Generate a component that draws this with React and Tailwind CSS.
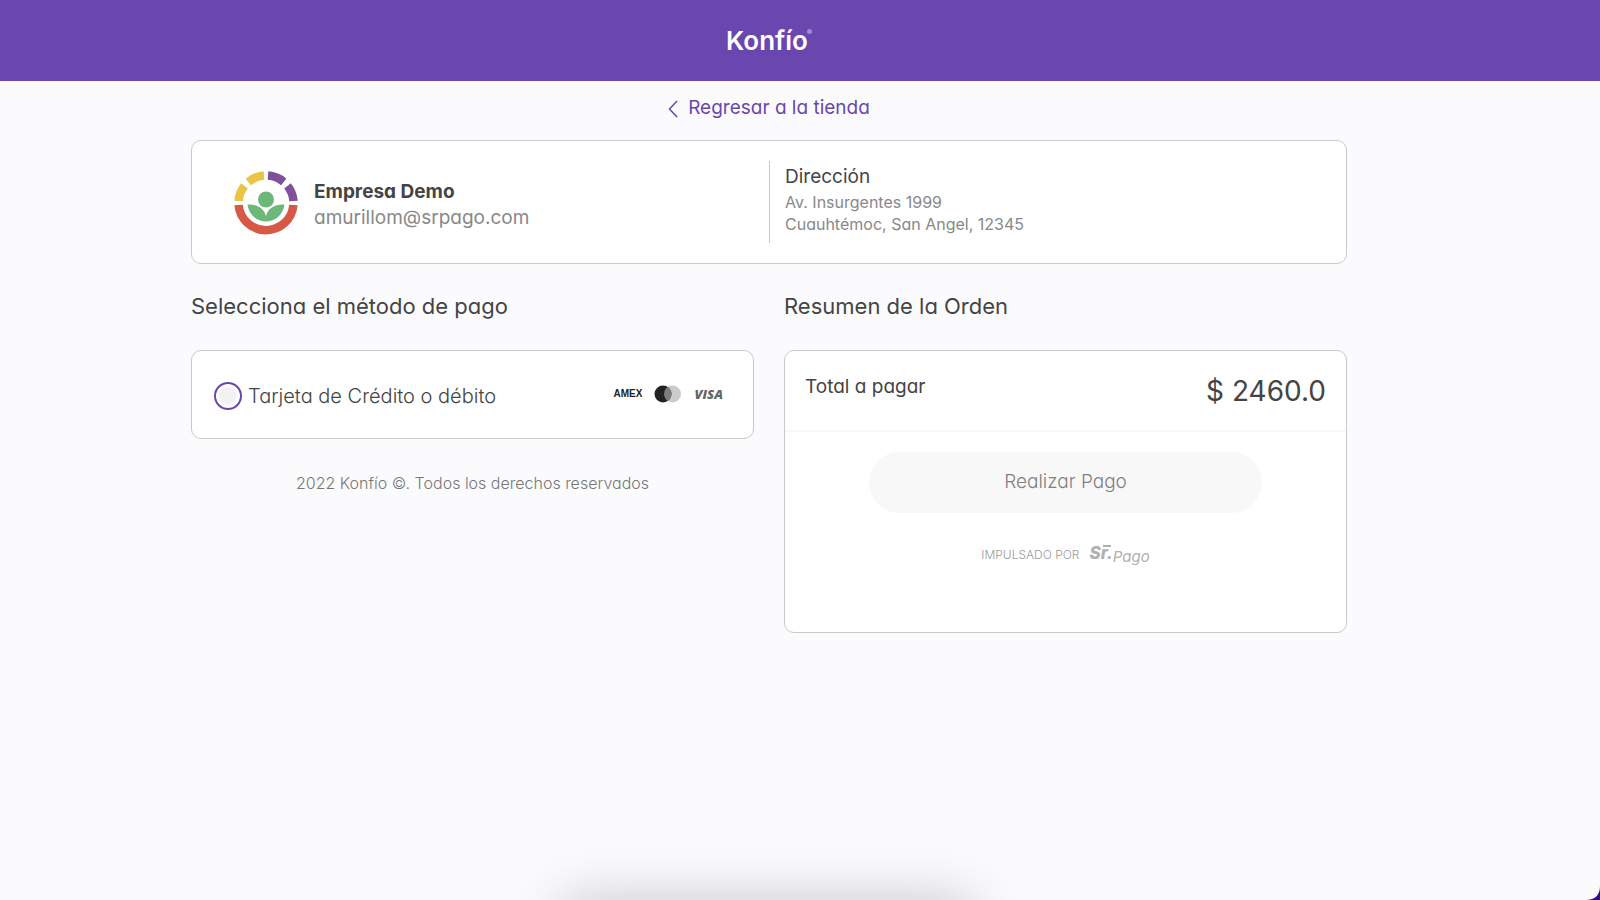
function KonfioLogo() {
  return (
    <div className="relative pr-1 text-[26px] leading-8 font-semibold text-white" aria-label="Konfío">
      Konfío
      <span className="absolute top-1 right-0 size-[5px] rounded-full bg-[#9a8fd6]" />
    </div>
  );
}

function CompanyLogo() {
  return (
    <svg viewBox="0 0 64 64" className="size-16 shrink-0" aria-hidden="true">
      <g fill="none" strokeWidth="8.5">
        <path d="M4.5 30A27.5 27.5 0 0 1 10.5 14.8" stroke="#e9c545" />
        <path d="M14.3 10.9A27.5 27.5 0 0 1 30 4.6" stroke="#e9c545" />
        <path d="M34 4.6A27.5 27.5 0 0 1 49.7 10.9" stroke="#824f9c" />
        <path d="M53.5 14.8A27.5 27.5 0 0 1 59.5 30" stroke="#824f9c" />
        <path d="M4.6 34A27.5 27.5 0 0 0 59.4 34" stroke="#d75845" />
      </g>
      <circle cx="32" cy="28.5" r="8" fill="#6cb878" />
      <path d="M13.500 33.500C23 33 30 37 32 45C34 37 41 33 50.500 33.500C49 44 41 50.500 32 50.500C23 50.500 15 44 13.500 33.500Z" fill="#6cb878" />
    </svg>
  );
}

function CardBrands() {
  return (
    <div className="flex items-center pb-0.5">
      <span className="font-['Liberation_Sans',sans-serif] text-[10px] leading-4 font-bold text-[#222222]">AMEX</span>
      <svg viewBox="0 0 28 18" className="ml-3 h-[18px] w-7" role="img" aria-label="Mastercard">
        <circle cx="18.500" cy="9" r="8.500" fill="#cbcbcb" />
        <circle cx="9" cy="9" r="8.500" fill="#222222" />
        <path d="M13.750 2A8.500 8.500 0 0 1 13.750 16A8.500 8.500 0 0 1 13.750 2Z" fill="#7d7d7d" />
      </svg>
      <span className="ml-3 font-['Open_Sans',sans-serif] text-[13px] leading-4 font-extrabold text-[#666666] italic">VISA</span>
    </div>
  );
}

function SrPagoLogo() {
  return (
    <span className="flex text-[#b0b0b0] italic">
      <span className="relative text-[17px] leading-5 font-extrabold">
        Sr.
        <span className="absolute top-0.5 right-0.5 h-0.5 w-2 bg-[#b0b0b0]" />
      </span>
      <span className="pt-1 text-[15px] leading-5">Pago</span>
    </span>
  );
}

export default function App() {
  return (
    <div className="relative min-h-screen overflow-hidden bg-[#fbfbfd] font-['Inter',sans-serif] text-[#444444] [font-feature-settings:'cv11']">
      <header className="flex h-[81px] items-center justify-center bg-[#6a46af] pr-[62px]">
        <KonfioLogo />
      </header>

      <main className="pr-[62px]">
        <div className="mx-auto max-w-[1156px]">
          <nav className="flex justify-center pt-[13px] pb-[18px]">
            <a href="#tienda" className="flex items-center gap-2.5 text-[19px] leading-7 text-[#6a46af]">
              <svg viewBox="0 0 10 18" className="mt-0.5 h-[18px] w-2.5" fill="none" stroke="currentColor" strokeWidth="1.500" aria-hidden="true">
                <path d="M9 1L1.500 9L9 17" />
              </svg>
              Regresar a la tienda
            </a>
          </nav>

          <section className="grid h-[124px] grid-cols-2 items-center rounded-[10px] border border-[#cacaca] bg-white">
            <div className="flex items-center gap-4 pt-0.5 pl-[42px]">
              <CompanyLogo />
              <div>
                <h2 className="pt-1 text-[19px] leading-[26px] font-bold">Empresa Demo</h2>
                <p className="text-[19px] leading-[26px] text-[#888888]">amurillom@srpago.com</p>
              </div>
            </div>
            <address className="h-[82px] border-l border-[#cacaca] pl-[15px] text-[16px] leading-[22px] text-[#888888] not-italic">
              <h2 className="pt-0.5 text-[19px] leading-7 text-[#444444]">Dirección</h2>
              Av. Insurgentes 1999
              <br />
              Cuauhtémoc, San Angel, 12345
            </address>
          </section>

          <div className="mt-7 grid grid-cols-2 items-start gap-[30px]">
            <section>
              <h2 className="text-[22px] leading-7">Selecciona el método de pago</h2>
              <div className="mt-[30px] flex h-[89px] items-center justify-between rounded-[10px] border border-[#cacaca] bg-white pr-[30px] pl-[22px]">
                <label className="flex items-center gap-1.5 pt-0.5 text-[20px] leading-7 font-light">
                  <input
                    type="radio"
                    name="metodo"
                    className="size-7 appearance-none rounded-full border-2 border-[#6a46af] bg-[#f2f2f2] shadow-[inset_0_0_0_3px_white] checked:bg-[#6a46af]"
                  />
                  Tarjeta de Crédito o débito
                </label>
                <CardBrands />
              </div>
              <p className="mt-8 text-center text-[16px] leading-6 font-light text-[#777777]">
                2022 Konfío ©. Todos los derechos reservados
              </p>
            </section>

            <section>
              <h2 className="text-[22px] leading-7">Resumen de la Orden</h2>
              <div className="mt-[30px] h-[283px] rounded-[10px] border border-[#cacaca] bg-white">
                <div className="flex h-[81px] justify-between border-b-2 border-[#f8f8f8] px-5 pt-[22px]">
                  <span className="text-[19px] leading-7">Total a pagar</span>
                  <span className="text-[28px] leading-9">$ 2460.0</span>
                </div>
                <div className="flex flex-col items-center pt-5">
                  <button type="button" className="h-[61px] w-[70%] rounded-full bg-[#f8f8f8] text-[19px] font-light text-[#808080]">
                    Realizar Pago
                  </button>
                  <div className="mt-[30px] flex items-center gap-2.5">
                    <span className="text-[12px] leading-5 font-light text-[#999999]">IMPULSADO POR</span>
                    <SrPagoLogo />
                  </div>
                </div>
              </div>
            </section>
          </div>
        </div>
      </main>

      <div className="pointer-events-none absolute inset-x-0 top-full flex justify-center pr-[66px]">
        <div className="h-20 w-[410px] shadow-[0_0_56px_rgba(0,0,0,0.21)]" />
      </div>
      <svg viewBox="0 0 14 14" className="pointer-events-none absolute right-0 bottom-0 size-3.5" aria-hidden="true">
        <path d="M14 0V14H0C9 14 14 9 14 0Z" fill="#2f0a8a" />
      </svg>
    </div>
  );
}
